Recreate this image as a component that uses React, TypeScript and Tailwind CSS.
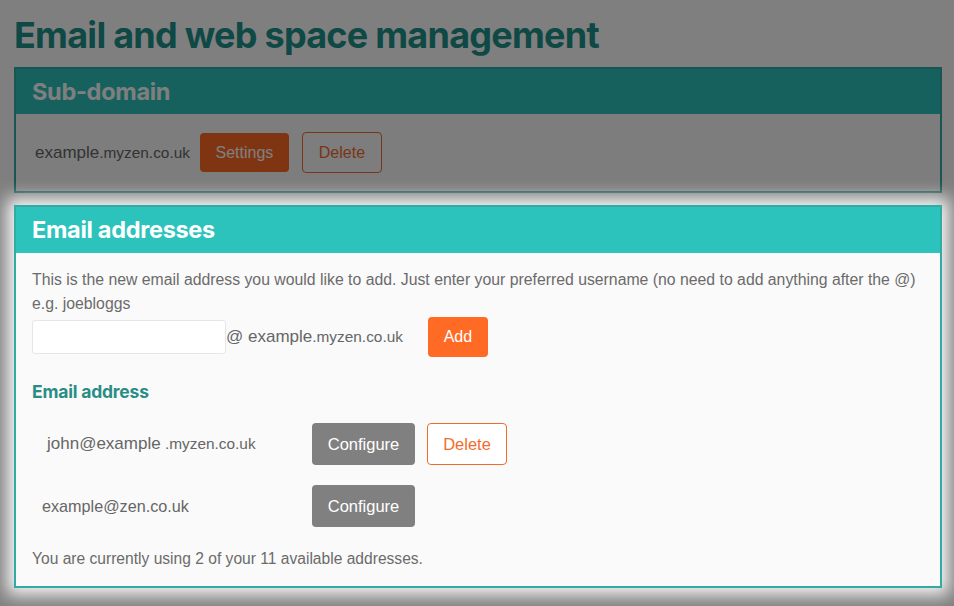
import { useState } from "react";

const body = { fontFamily: '"Liberation Sans", Arial, sans-serif' };
const head = { fontFamily: 'Inter, "Noto Sans", sans-serif' };

function Domain({ user, sub, size = "text-[17px]" }: { user: string; sub: string; size?: string }) {
  return (
    <span className="text-[#666] whitespace-pre">
      <span className={size}>{user}</span>
      <span className="text-[15.4px]">{sub}</span>
    </span>
  );
}

function SubDomainPanel() {
  return (
    <section className="border-2 border-[#33aaa4] bg-[#fafafa]">
      <div className="h-[45px] flex items-center px-[16px] bg-[#2cc3bc]">
        <h2 style={head} className="text-[23.5px] font-bold text-white tracking-[-0.3px]">Sub-domain</h2>
      </div>
      <div className="h-[77px] flex items-center pl-[19px]">
        <Domain user="example" sub=".myzen.co.uk" />
        <button className="ml-[10px] h-[39px] w-[89px] rounded-[4px] bg-[#ff6a24] text-white text-[16px]">Settings</button>
        <button className="ml-[13px] h-[41px] w-[80px] rounded-[4px] border border-[#f26b2d] text-[#f26b2d] text-[16px]">Delete</button>
      </div>
    </section>
  );
}

function EmailPanel() {
  const [name, setName] = useState("");
  const rows = [
    { user: "john@example", sub: " .myzen.co.uk", pad: "pl-[15px]", size: "text-[17px]", removable: true },
    { user: "example@zen.co.uk", sub: "", pad: "pl-[10px]", size: "text-[16.2px]", removable: false },
  ];

  return (
    <section className="relative z-20 mt-[12px] border-2 border-[#33aaa4] bg-[#fafafa] shadow-[0_0_16px_7px_rgba(255,255,255,0.95)]">
      <div className="h-[46px] flex items-center px-[16px] bg-[#2cc3bc]">
        <h2 style={head} className="text-[23.5px] font-bold text-white tracking-[-0.3px]">Email addresses</h2>
      </div>
      <div className="px-[16px] pt-[15px] pb-[15px]">
        <p className="text-[15.8px] leading-[24px] text-[#6b6b6b]">
          This is the new email address you would like to add. Just enter your preferred username (no need to add anything after the @) e.g. joebloggs
        </p>
        <div className="mt-[1px] h-[40px] flex items-center">
          <input
            value={name}
            onChange={(e) => setName(e.target.value)}
            className="h-[34px] w-[194px] rounded-[3px] border border-[#e6e6e6] bg-white px-2 outline-none"
          />
          <Domain user="@ example" sub=".myzen.co.uk" />
          <button className="ml-[25px] h-[40px] w-[60px] rounded-[4px] bg-[#ff6a24] text-white text-[16px]">Add</button>
        </div>

        <h3 style={head} className="mt-[23px] leading-[24px] text-[17.5px] font-bold text-[#2a8c86] tracking-[-0.2px]">Email address</h3>

        <div className="mt-[19px] flex flex-col gap-[20px]">
          {rows.map((r) => (
            <div key={r.user} className="flex items-center h-[42px]">
              <div className={`w-[280px] ${r.pad}`}>
                <Domain user={r.user} sub={r.sub} size={r.size} />
              </div>
              <button className="h-[42px] w-[103px] rounded-[4px] bg-[#808080] text-white text-[16.5px]">Configure</button>
              {r.removable && (
                <button className="ml-[12px] h-[42px] w-[80px] rounded-[4px] border border-[#f26b2d] bg-white text-[#f26b2d] text-[16.5px]">Delete</button>
              )}
            </div>
          ))}
        </div>

        <p className="mt-[20px] text-[15.6px] leading-[24px] text-[#6b6b6b]">
          You are currently using 2 of your 11 available addresses.
        </p>
      </div>
    </section>
  );
}

export default function App() {
  return (
    <div style={body} className="relative min-h-[606px] bg-white overflow-hidden">
      <div className="ml-[14px] w-[928px]">
        <h1 style={head} className="pt-[13px] pb-[10px] leading-[44px] text-[36px] font-bold text-[#1c928b] tracking-[-0.75px]">
          Email and web space management
        </h1>
        <SubDomainPanel />
        <EmailPanel />
      </div>
      {/* dim everything except the focused panel */}
      <div className="absolute inset-0 z-10 bg-black/50" />
    </div>
  );
}
